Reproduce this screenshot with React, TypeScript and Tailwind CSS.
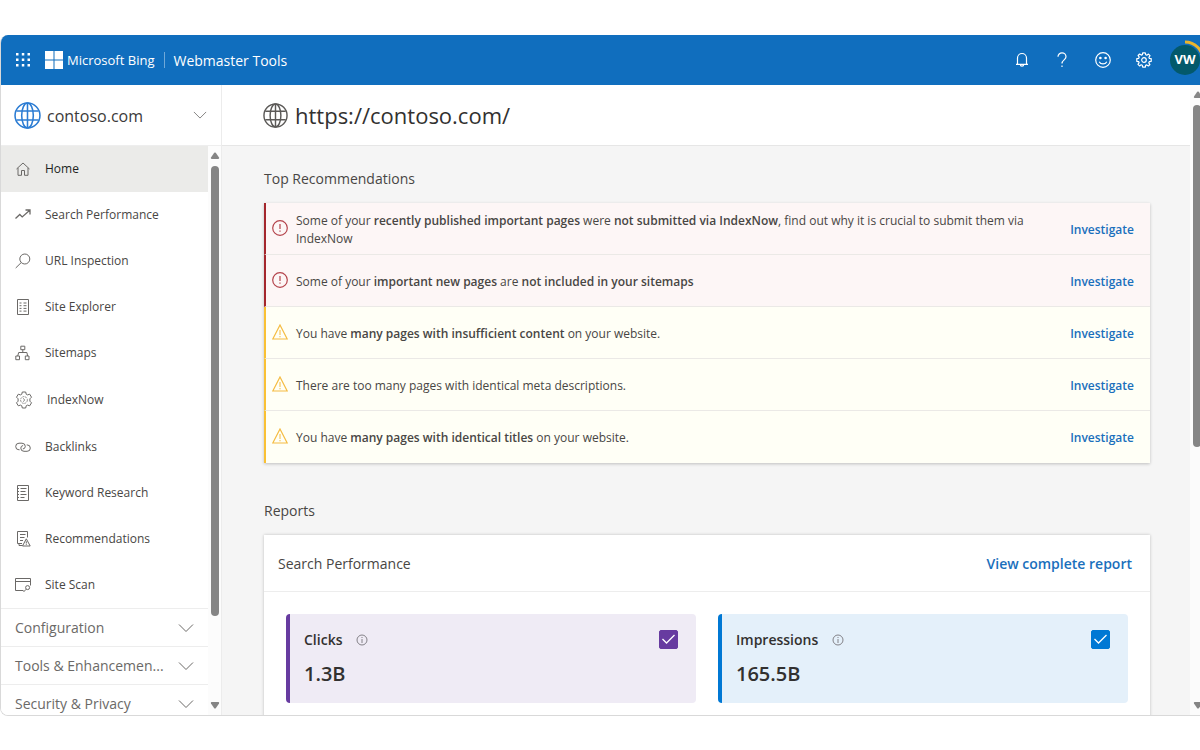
import React, { useState } from 'react'

type IconProps = { className?: string }

const GlobeIcon = ({ className }: IconProps) => (
  <svg viewBox="0 0 26 26" className={className} fill="none" stroke="currentColor" strokeWidth="1.5" aria-hidden="true">
    <circle cx="13" cy="13" r="12" />
    <ellipse cx="13" cy="13" rx="5.6" ry="12" />
    <path d="M13 1v24M2.4 8.6h21.2M2.4 17.4h21.2" />
  </svg>
)

const ChevronIcon = ({ className }: IconProps) => (
  <svg viewBox="0 0 16 10" className={className} fill="none" stroke="currentColor" aria-hidden="true">
    <path d="M1 1.5l7 7 7-7" />
  </svg>
)

const NavSvg = ({ children }: { children: React.ReactNode }) => (
  <svg viewBox="0 0 16 16" className="h-4 w-4 shrink-0 text-[#6b6967]" fill="none" stroke="currentColor" aria-hidden="true">
    {children}
  </svg>
)

const HomeIcon = () => (
  <NavSvg>
    <path d="M1.5 8L8 2l6.5 6M3 7v7.3h3.500V9.500h3v4.800H13V7" />
  </NavSvg>
)

const TrendIcon = () => (
  <NavSvg>
    <path d="M.5 11.500l4.300-4 2.400 2.400L14.500 3.500M10.500 3h4.500v4.500" strokeWidth="1.300" />
  </NavSvg>
)

const SearchIcon = () => (
  <NavSvg>
    <circle cx="9.800" cy="6" r="5" />
    <path d="M6.200 9.600L.7 15" />
  </NavSvg>
)

const ExplorerIcon = () => (
  <NavSvg>
    <path d="M2.500.5h11v15h-11z" />
    <path d="M4.500 4h2M8.500 4h3M4.500 6.700h2M8.500 6.700h3M4.500 9.400h2M8.500 9.400h3M4.500 12.100h2M8.500 12.100h3" />
  </NavSvg>
)

const SitemapIcon = () => (
  <NavSvg>
    <path d="M5.800 1.200h4v3.500h-4zM.8 11h3.700v3.700H.8zM10.300 11H14v3.700h-3.700zM7.800 4.700v2.800M2.700 11l1-3.500h8.200l.7 3.500" />
  </NavSvg>
)

const IndexNowIcon = () => (
  <svg viewBox="0 0 18 18" className="h-[18px] w-[18px] shrink-0 text-[#6b6967]" fill="none" stroke="currentColor" aria-hidden="true">
    <path d="M7.300 1h3.400l.5 2.200 1.300.7 2.200-.7 1.800 3-1.600 1.600v2.400l1.600 1.600-1.800 3-2.200-.7-1.300.7-.5 2.200H7.300l-.5-2.200-1.300-.7-2.200.7-1.800-3 1.600-1.600V7.800L1.500 6.200l1.800-3 2.200.7 1.300-.7z" strokeLinejoin="round" />
    <circle cx="9" cy="9" r="3.400" strokeWidth=".7" strokeDasharray="2 .8" />
    <path d="M8 7.300L9.800 9 8 10.700" strokeWidth=".8" />
  </svg>
)

const LinkIcon = () => (
  <NavSvg>
    <path d="M4.600 10.800H4A3.300 3.300 0 0 1 4 4.200h3a3.300 3.300 0 0 1 3.300 3.300A2.700 2.700 0 0 1 7.800 10" />
    <path d="M11.700 5.900h.4a3.200 3.200 0 0 1 0 6.400H9A3.200 3.200 0 0 1 5.800 9.100a2.700 2.700 0 0 1 2.300-2.600" />
  </NavSvg>
)

const KeywordIcon = () => (
  <NavSvg>
    <path d="M2.500.5h11v15h-11zM2.500 3.500H4M2.500 6.500H4M2.500 9.500H4M2.500 12.500H4" />
    <path d="M5.500 3.500h6M5.500 6.500h5M5.500 9.500h6M5.500 12.500h4" />
  </NavSvg>
)

const RecommendationIcon = () => (
  <NavSvg>
    <path d="M7.500 14.500H4v-2H2.500V.5h10v6M5 3.500h5.500M5 6.500h4.500M5 9.500h3M4 12.500h3" />
    <path d="M11.300 7.800l3.900 7.200H7.500zM11.300 10.300v2.200M11.300 13.200v.8" />
  </NavSvg>
)

const ScanIcon = () => (
  <NavSvg>
    <path d="M8.500 13.500H.5v-12h15v7M.5 4.500h15" />
    <circle cx="12.600" cy="10.600" r="2" />
    <path d="M11.200 12.200L8.500 15" />
  </NavSvg>
)

const ErrorIcon = () => (
  <svg viewBox="0 0 16 16" className="mb-1 h-4 w-4 shrink-0 text-[#b4434b]" fill="none" stroke="currentColor" aria-hidden="true">
    <circle cx="8" cy="8" r="7.300" strokeWidth="1.200" />
    <path d="M8 4v5M8 10.500v1.300" strokeWidth="1.200" />
  </svg>
)

const WarningIcon = () => (
  <svg viewBox="0 0 16 16" className="mb-1 h-4 w-4 shrink-0 text-[#f5bc42]" fill="none" stroke="currentColor" aria-hidden="true">
    <path d="M8 1l7.200 14H.8z" strokeWidth="1.200" />
    <path d="M8 6v5M8 12v1.300" />
  </svg>
)

const InfoIcon = () => (
  <svg viewBox="0 0 12 12" className="h-3 w-3 text-[#77757a]" fill="none" stroke="currentColor" aria-hidden="true">
    <circle cx="6" cy="6" r="5" strokeWidth=".9" />
    <path d="M6 5v4M6 3v1" strokeWidth=".9" />
  </svg>
)

const navItems = [
  { label: 'Home', icon: HomeIcon, active: true },
  { label: 'Search Performance', icon: TrendIcon },
  { label: 'URL Inspection', icon: SearchIcon },
  { label: 'Site Explorer', icon: ExplorerIcon },
  { label: 'Sitemaps', icon: SitemapIcon },
  { label: 'IndexNow', icon: IndexNowIcon, tall: true },
  { label: 'Backlinks', icon: LinkIcon },
  { label: 'Keyword Research', icon: KeywordIcon },
  { label: 'Recommendations', icon: RecommendationIcon },
  { label: 'Site Scan', icon: ScanIcon },
]

const navGroups = ['Configuration', 'Tools & Enhancemen...', 'Security & Privacy']

const recommendations = [
  {
    level: 'error',
    text: <>Some of your <b className="font-semibold">recently published important pages</b> were <b className="font-semibold">not submitted via IndexNow</b>, find out why it is crucial to submit them via IndexNow</>,
  },
  {
    level: 'error',
    text: <>Some of your <b className="font-semibold">important new pages</b> are <b className="font-semibold">not included in your sitemaps</b></>,
  },
  {
    level: 'warning',
    text: <>You have <b className="font-semibold">many pages with insufficient content</b> on your website.</>,
  },
  {
    level: 'warning',
    text: <>There are too many pages with identical meta descriptions.</>,
  },
  {
    level: 'warning',
    text: <>You have <b className="font-semibold">many pages with identical titles</b> on your website.</>,
  },
]

const TopBar = () => (
  <header className="flex h-[50px] shrink-0 items-center justify-between overflow-hidden bg-[#106ebe] pl-3.5 text-white">
    <div className="flex items-center">
      <button type="button" aria-label="App launcher" className="mr-3.5">
        <svg viewBox="0 0 16 16" className="h-4 w-4" fill="currentColor" aria-hidden="true">
          <path d="M1 1h2.500v2.500H1zM6.800 1h2.500v2.500H6.800zM12.500 1H15v2.500h-2.500zM1 6.500h2.500V9H1zM6.800 6.500h2.500V9H6.800zM12.500 6.500H15V9h-2.500zM1 12h2.500v2.500H1zM6.800 12h2.500v2.500H6.800zM12.500 12H15v2.500h-2.500z" />
        </svg>
      </button>
      <svg viewBox="0 0 18 18" className="mr-1 h-[18px] w-[18px]" fill="currentColor" aria-hidden="true">
        <path d="M0 0h8.500v8.500H0zM9.500 0H18v8.500H9.500zM0 9.500h8.500V18H0zM9.500 9.500H18V18H9.500z" />
      </svg>
      <span className="pt-0.5 text-[13px] font-medium">Microsoft Bing</span>
      <span className="mr-2 ml-2.5 h-4 w-px bg-white/40" />
      <span className="text-[14px] font-medium">Webmaster Tools</span>
    </div>
    <div className="flex shrink-0 items-center">
      <button type="button" aria-label="Notifications" className="mr-6">
        <svg viewBox="0 0 16 16" className="h-4 w-4" fill="none" stroke="currentColor" strokeWidth="1.200" aria-hidden="true">
          <path d="M3.500 12V6a4.500 4.500 0 0 1 9 0v6M2 12.300h12M6.300 12.500a1.700 1.700 0 0 0 3.400 0" />
        </svg>
      </button>
      <button type="button" aria-label="Help" className="mr-6">
        <svg viewBox="0 0 16 16" className="h-4 w-4" fill="none" stroke="currentColor" strokeWidth="1.200" aria-hidden="true">
          <path d="M4 4.800a4 4 0 0 1 8 0C12 7.800 8 8 8 11.500M8 13.500V15" />
        </svg>
      </button>
      <button type="button" aria-label="Feedback" className="mr-6">
        <svg viewBox="0 0 18 18" className="h-[18px] w-[18px]" fill="none" stroke="currentColor" strokeWidth="1.200" aria-hidden="true">
          <circle cx="9" cy="9" r="7.300" />
          <path d="M5.200 10.700c1.600 3 6 3 7.600 0" />
          <circle cx="6.400" cy="7" r=".7" fill="currentColor" />
          <circle cx="11.600" cy="7" r=".7" fill="currentColor" />
        </svg>
      </button>
      <button type="button" aria-label="Settings" className="mr-[18px]">
        <svg viewBox="0 0 16 16" className="h-4 w-4" fill="none" stroke="currentColor" strokeWidth="1.200" strokeLinejoin="round" aria-hidden="true">
          <path d="M6.700.8h2.600l.4 1.900 1.100.5 1.700-1.100 1.500 1.500-1.100 1.700.5 1.100 1.800.3v2.600l-1.900.4-.5 1.100 1.100 1.700-1.500 1.500-1.700-1.100-1.100.5-.3 1.800H6.700l-.4-1.900-1.100-.5-1.700 1.100L2 12.400l1.100-1.700-.5-1.100-1.800-.3V6.700l1.900-.4.500-1.100L2.100 3.500 3.600 2l1.700 1.100 1.100-.5z" />
          <circle cx="8" cy="8" r="2.300" />
        </svg>
      </button>
      <button type="button" aria-label="Account" className="relative grid h-[30px] w-[30px] place-items-center rounded-full bg-[#03596b] text-[13px] font-bold">
        VW
        <svg viewBox="0 0 40 40" className="absolute -top-[5px] -left-[5px] h-10 w-10" fill="none" aria-hidden="true">
          <path d="M20 2a18 18 0 0 1 18 18" stroke="#eab52e" strokeWidth="3" />
        </svg>
      </button>
    </div>
  </header>
)

const UpArrow = () => (
  <svg viewBox="0 0 10 8" className="h-2 w-2.5 shrink-0" fill="#858585" aria-hidden="true">
    <path d="M4.200.8q.8-.8 1.600 0L9 5.600q.6 1.400-.8 1.400H1.800Q.4 7 1 5.600z" />
  </svg>
)

const DownArrow = () => (
  <svg viewBox="0 0 10 8" className="h-2 w-2.5 shrink-0" fill="#858585" aria-hidden="true">
    <path d="M4.200 7.200q.8.800 1.600 0L9 2.400Q9.600 1 8.200 1H1.800Q.4 1 1 2.400z" />
  </svg>
)

const Sidebar = () => (
  <aside className="flex w-[221px] shrink-0 flex-col border-r border-[#ececec] bg-white">
    <div className="relative flex h-[61px] shrink-0 items-center border-b border-[#eeeeee] pl-[13px]">
      <GlobeIcon className="h-[27px] w-[27px] shrink-0 text-[#2b7cd3]" />
      <select aria-label="Site" className="ml-1.5 flex-1 appearance-none bg-transparent pt-0.5 text-[16px] text-[#3b3a39] outline-none">
        <option>contoso.com</option>
      </select>
      <ChevronIcon className="pointer-events-none absolute right-3.5 h-2.5 w-3.5 text-[#767472]" />
    </div>
    <div className="flex min-h-0 flex-1">
      <nav className="min-w-0 flex-1 overflow-hidden">
        <ul>
          {navItems.map(({ label, icon: Icon, active, tall }) => (
            <li key={label}>
              <a
                href="#"
                aria-current={active ? 'page' : undefined}
                className={`flex items-center gap-3.5 pl-3.5 text-[12px] ${tall ? 'h-12' : 'h-[46px]'} ${active ? 'bg-[#ebebe9] text-[#201f1e]' : 'text-[#484644]'}`}
              >
                <Icon />
                <span>{label}</span>
              </a>
            </li>
          ))}
        </ul>
        {navGroups.map((group) => (
          <button
            key={group}
            type="button"
            aria-expanded="false"
            className="flex h-[38px] w-full items-center justify-between border-t border-[#ededed] pr-3.5 pl-3.5 text-[14px] text-[#6b6967]"
          >
            <span className="whitespace-nowrap">{group}</span>
            <ChevronIcon className="h-2.5 w-4 shrink-0" />
          </button>
        ))}
      </nav>
      <div className="flex w-[13px] shrink-0 flex-col items-center bg-[#fcfcfc] py-1.5">
        <UpArrow />
        <div className="my-1.5 flex min-h-0 w-2 flex-1 flex-col">
          <div className="h-[85%] rounded-full bg-[#858585]" />
        </div>
        <DownArrow />
      </div>
    </div>
  </aside>
)

type MetricProps = {
  label: string
  value: string
  cardClass: string
  boxClass: string
}

const MetricCard = ({ label, value, cardClass, boxClass }: MetricProps) => {
  const [checked, setChecked] = useState(true)

  return (
    <label className={`flex h-[89px] items-start justify-between rounded border-l-4 pt-4 pr-[18px] pl-3.5 text-[#323130] ${cardClass}`}>
      <span>
        <span className="flex items-center gap-3.5 text-[14px] leading-5 font-semibold">
          {label}
          <InfoIcon />
        </span>
        <span className="mt-2 block text-[20px] leading-8 font-semibold">{value}</span>
      </span>
      <span className="relative">
        <input
          type="checkbox"
          checked={checked}
          onChange={(e) => setChecked(e.target.checked)}
          className={`block h-[19px] w-[19px] appearance-none rounded-xs border ${boxClass}`}
        />
        {checked && (
          <svg viewBox="0 0 19 19" className="pointer-events-none absolute inset-0 h-[19px] w-[19px]" fill="none" stroke="#fff" strokeWidth="1.300" aria-hidden="true">
            <path d="M3.500 9l4 4 8-8" />
          </svg>
        )}
      </span>
    </label>
  )
}

export default function App() {
  return (
    <div className="h-screen bg-white pt-[35px] pb-[34px] font-['Open_Sans','Noto_Sans',sans-serif]">
      <div className="flex h-full flex-col overflow-hidden rounded-tl-lg rounded-bl-lg border-b border-l border-[#d9d9d9]">
        <TopBar />
        <div className="flex min-h-0 flex-1">
          <Sidebar />
          <main className="flex min-w-0 flex-1 flex-col overflow-hidden bg-[#f5f5f5]">
            <div className="flex h-[61px] shrink-0 items-center gap-[7px] border-b border-[#e6e6e6] bg-white pl-[41px]">
              <GlobeIcon className="h-[25px] w-[25px] text-[#5c5a58]" />
              <h1 className="text-[22px] text-[#323130]">https://contoso.com/</h1>
            </div>
            <div className="pr-10 pl-[42px]">
              <h2 className="mt-[23px] text-[14px] leading-5 text-[#484644]">Top Recommendations</h2>
              <ul className="mt-3.5 shadow-[0_1px_3px_rgba(0,0,0,0.22)]">
                {recommendations.map((item, i) => (
                  <li
                    key={i}
                    className={`flex h-[52px] items-center border-b border-l-2 border-b-[#ebe9e6] pt-0.5 pr-4 pl-1.5 last:border-b-0 ${item.level === 'error' ? 'border-l-[#a4262c] bg-[#fdf6f6]' : 'border-l-[#f9c033] bg-[#fffff6]'}`}
                  >
                    {item.level === 'error' ? <ErrorIcon /> : <WarningIcon />}
                    <p className="ml-2 flex-1 text-[12px] leading-[18px] text-[#484644]">{item.text}</p>
                    <a href="#" className="ml-6 text-[12px] font-semibold text-[#1a6fbc]">Investigate</a>
                  </li>
                ))}
              </ul>
              <h2 className="mt-[38px] text-[14px] leading-5 text-[#484644]">Reports</h2>
              <section className="mt-3.5 bg-white shadow-[0_0_3px_rgba(0,0,0,0.22)]">
                <div className="flex h-[57px] items-center justify-between border-b border-[#ededed] pr-[18px] pl-3.5">
                  <h3 className="text-[14px] text-[#484644]">Search Performance</h3>
                  <a href="#" className="text-[14px] font-semibold text-[#1a6fbc]">View complete report</a>
                </div>
                <div className="grid grid-cols-2 gap-[22px] px-[22px] pt-[22px] pb-10">
                  <MetricCard label="Clicks" value="1.3B" cardClass="border-[#673ba0] bg-[#efebf5]" boxClass="border-[#673ba0] checked:bg-[#673ba0]" />
                  <MetricCard label="Impressions" value="165.5B" cardClass="border-[#0078d4] bg-[#e4f0fa]" boxClass="border-[#0078d4] checked:bg-[#0078d4]" />
                </div>
              </section>
            </div>
          </main>
          <div className="flex w-2.5 shrink-0 flex-col overflow-hidden bg-[#fbfbfb] py-1.5 pl-[3px]">
            <UpArrow />
            <div className="my-1.5 flex min-h-0 w-2 flex-1 flex-col">
              <div className="h-[58%] rounded bg-[#858585]" />
            </div>
            <DownArrow />
          </div>
        </div>
      </div>
    </div>
  )
}
